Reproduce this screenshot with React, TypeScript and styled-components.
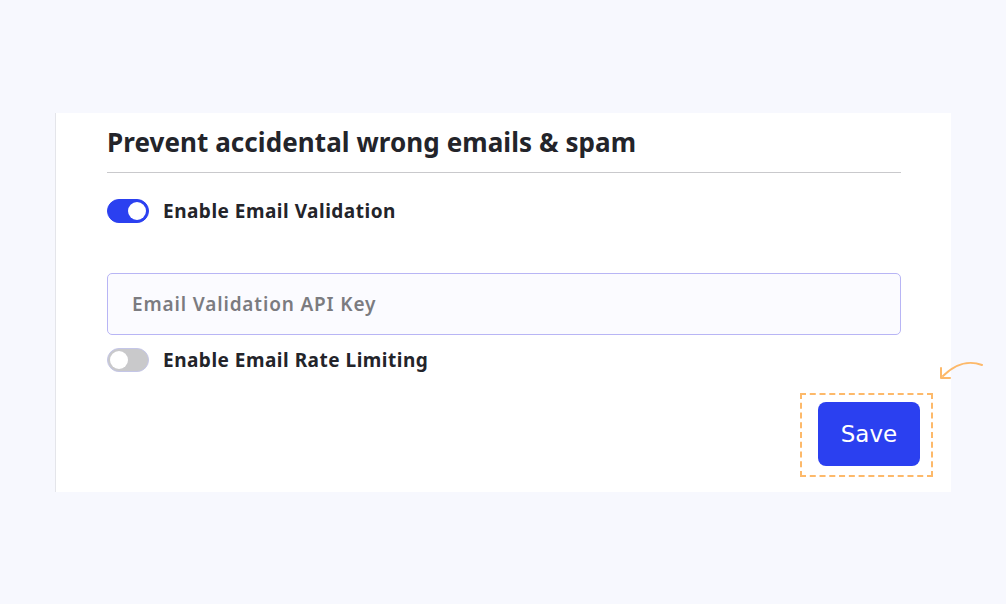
import React, { useState } from 'react';
import styled, { createGlobalStyle } from 'styled-components';

const GlobalStyle = createGlobalStyle`
  html, body {
    margin: 0;
    padding: 0;
    background: #f7f8fe;
    font-family: "Noto Sans", Lato, sans-serif;
  }
`;

const Page = styled.div`
  width: 1006px;
  height: 604px;
  padding: 113px 0 0 55px;
  box-sizing: border-box;
`;

const Card = styled.section`
  position: relative;
  width: 896px;
  height: 379px;
  box-sizing: border-box;
  background: #ffffff;
  border-left: 1px solid #e4e5ea;
  padding: 12px 50px 0 51px;
  display: flex;
  flex-direction: column;
`;

const Title = styled.h2`
  margin: 0;
  padding-bottom: 12px;
  font-size: 26px;
  font-weight: 700;
  color: #23242a;
  border-bottom: 1px solid #c9c9cc;
  line-height: 35px;
  letter-spacing: 0.08px;
`;

const ToggleRow = styled.label<{ $mt: number }>`
  display: flex;
  align-items: center;
  gap: 14px;
  margin-top: ${p => p.$mt}px;
  font-size: 19px;
  font-weight: 700;
  color: #23242a;
  cursor: pointer;
  user-select: none;
  line-height: 24px;
  letter-spacing: 0.5px;
`;

const Track = styled.span<{ $on: boolean }>`
  position: relative;
  width: 42px;
  height: 24px;
  border-radius: 12px;
  box-sizing: border-box;
  background: ${p => (p.$on ? '#2b40f0' : '#c9c9cb')};
  border: 1px solid ${p => (p.$on ? '#2b40f0' : '#c4c6e8')};
  flex-shrink: 0;
`;

const Knob = styled.span<{ $on: boolean }>`
  position: absolute;
  top: 2px;
  left: ${p => (p.$on ? '20px' : '2px')};
  width: 18px;
  height: 18px;
  border-radius: 50%;
  background: #ffffff;
`;

const KeyInput = styled.input`
  margin-top: 50px;
  height: 62px;
  box-sizing: border-box;
  border: 1px solid #b8b5f5;
  border-radius: 5px;
  background: #fbfbff;
  padding: 0 24px;
  font-family: inherit;
  font-size: 19px;
  font-weight: 600;
  letter-spacing: 0.85px;
  color: #23242a;
  outline: none;
  &::placeholder {
    color: #7b7b80;
  }
`;

const Actions = styled.div`
  display: flex;
  justify-content: flex-end;
  margin-top: 21px;
  margin-right: -32px;
`;

const Highlight = styled.div`
  padding: 7px 11px 9px 16px;
  border: 2px dashed #fdb96a;
`;

const SaveButton = styled.button`
  display: block;
  width: 102px;
  height: 64px;
  border: none;
  border-radius: 8px;
  background: #2b40f0;
  color: #ffffff;
  font-family: "DejaVu Sans", Verdana, sans-serif;
  font-size: 23px;
  cursor: pointer;
`;

const Arrow = styled.svg`
  position: absolute;
  right: -34px;
  top: 248px;
`;

function Toggle({ label, initial, mt }: { label: string; initial: boolean; mt: number }) {
  const [on, setOn] = useState(initial);
  return (
    <ToggleRow $mt={mt} onClick={() => setOn(!on)}>
      <Track $on={on}>
        <Knob $on={on} />
      </Track>
      {label}
    </ToggleRow>
  );
}

export default function App() {
  return (
    <>
      <GlobalStyle />
      <Page>
        <Card>
          <Title>Prevent accidental wrong emails &amp; spam</Title>
          <Toggle label="Enable Email Validation" initial mt={26} />
          <KeyInput placeholder="Email Validation API Key" />
          <Toggle label="Enable Email Rate Limiting" initial={false} mt={13} />
          <Actions>
            <Highlight>
              <SaveButton>Save</SaveButton>
            </Highlight>
          </Actions>
          <Arrow width="48" height="22" viewBox="0 0 48 22" fill="none">
            <path d="M45 4 C 32 -1, 18 3, 6 15" stroke="#fdb96a" strokeWidth="2" strokeLinecap="round" />
            <path d="M4 7 L 4 17 L 13 17" stroke="#fdb96a" strokeWidth="2" strokeLinecap="round" strokeLinejoin="round" />
          </Arrow>
        </Card>
      </Page>
    </>
  );
}
